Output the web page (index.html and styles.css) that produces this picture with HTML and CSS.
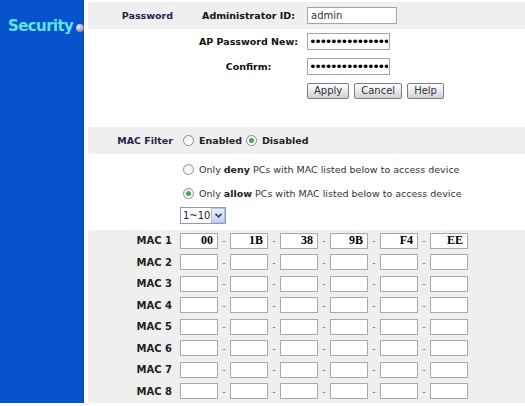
FILE: index.html
```html
<!DOCTYPE html>
<html>
<head>
    <title>Security</title>
    <link rel="stylesheet" href="styles.css">
</head>
<body>
    <div class="page">
        <div class="sidebar">
            <div class="side-title">Security<span class="ball"></span></div>
        </div>

        <div class="main">
            <!-- Password -->
            <div class="pw-grid">
                <div class="cell band sect">Password</div>
                <div class="cell band mid">Administrator ID:</div>
                <div class="cell band field"><input type="text" class="txt admin" value="admin"></div>

                <div class="cell"></div>
                <div class="cell mid">AP Password New:</div>
                <div class="cell field"><input type="password" class="txt pass" value="abcdefghijklmno"></div>

                <div class="cell"></div>
                <div class="cell mid">Confirm:</div>
                <div class="cell field"><input type="password" class="txt pass" value="abcdefghijklmno"></div>

                <div class="cell"></div>
                <div class="cell"></div>
                <div class="cell field btns">
                    <button class="btn">Apply</button>
                    <button class="btn">Cancel</button>
                    <button class="btn">Help</button>
                </div>
            </div>

            <!-- MAC Filter -->
            <div class="filter-grid">
                <div class="cell band sect">MAC Filter</div>
                <div class="cell band opts">
                    <label class="opt"><input type="radio" name="filter" class="radio"><b>Enabled</b></label>
                    <label class="opt"><input type="radio" name="filter" class="radio" checked><b>Disabled</b></label>
                </div>

                <div class="cell"></div>
                <div class="cell opts">
                    <label class="opt"><input type="radio" name="mode" class="radio"><span>Only <b>deny</b> PCs with MAC listed below to access device</span></label>
                </div>

                <div class="cell"></div>
                <div class="cell opts">
                    <label class="opt"><input type="radio" name="mode" class="radio" checked><span>Only <b>allow</b> PCs with MAC listed below to access device</span></label>
                </div>

                <div class="cell"></div>
                <div class="cell sel-cell">
                    <span class="sel-wrap">
                        <select class="sel">
                            <option>1~10</option>
                            <option>11~20</option>
                        </select>
                        <span class="sel-btn">
                            <svg width="7" height="5" viewBox="0 0 7 5"><path d="M0.5 0.8 L3.5 3.8 L6.5 0.8" fill="none" stroke="#2a3f7a" stroke-width="1.6"/></svg>
                        </span>
                    </span>
                </div>
            </div>

            <!-- MAC list -->
            <div class="mac-table" id="macTable"></div>
        </div>
    </div>

    <script>
        const macs = [
            ['00', '1B', '38', '9B', 'F4', 'EE']
        ];
        const table = document.getElementById('macTable');

        for (let i = 0; i < 8; i++) {
            const row = document.createElement('div');
            row.className = 'mac-row';
            let html = `<div class="mac-label">MAC ${i + 1}</div><div class="mac-fields">`;
            for (let j = 0; j < 6; j++) {
                const val = macs[i] ? macs[i][j] : '';
                if (j > 0) html += '<span class="dash">-</span>';
                html += `<input type="text" class="mac-in" maxlength="2" value="${val}">`;
            }
            html += '</div>';
            row.innerHTML = html;
            table.appendChild(row);
        }
    </script>
</body>
</html>
```

FILE: styles.css
```css
* {
    margin: 0;
    padding: 0;
    box-sizing: border-box;
}

body {
    background: #fff;
    font-family: "DejaVu Sans", Verdana, sans-serif;
    font-size: 9.5px;
    color: #222;
    overflow: hidden;
}

.page {
    display: flex;
    height: 406px;
}

.sidebar {
    width: 84px;
    height: 403px;
    background: #0653cd;
    border-right: 1px solid #0a47a8;
    flex-shrink: 0;
    padding-top: 17px;
}

.side-title {
    position: relative;
    color: #5fe2ea;
    font-family: "DejaVu Sans", Tahoma, sans-serif;
    font-weight: bold;
    font-size: 15px;
    padding-left: 8px;
    letter-spacing: -0.6px;
}

.ball {
    position: absolute;
    left: 76px;
    top: 7px;
    width: 8px;
    height: 8px;
    border-radius: 50%;
    background: radial-gradient(circle at 35% 35%, #f4f2f8 0%, #a8a0b8 55%, #6b5f80 100%);
}

.main {
    flex: 1;
    margin-left: 4px;
}

.cell {
    display: flex;
    align-items: center;
}

.band {
    background: #efefef;
}

.sect {
    justify-content: flex-end;
    padding-right: 17px;
    font-weight: bold;
    color: #23234e;
}

/* Password block */
.pw-grid {
    display: grid;
    grid-template-columns: 102px 117px 1fr;
    grid-template-rows: 27px 25px 25px 23px;
    margin-top: 2px;
}

.mid {
    justify-content: center;
    font-weight: bold;
    color: #111;
}

.txt {
    height: 17px;
    border: 1px solid #a5a5a5;
    background: #fff;
    font-family: "DejaVu Sans", Verdana, sans-serif;
    font-size: 10px;
    padding: 0 3px;
    color: #333;
    outline: none;
}

.admin {
    width: 90px;
}

.pass {
    width: 83px;
    font-size: 13px;
    letter-spacing: -2.4px;
    color: #000;
    padding: 0 1px;
}

.btns {
    gap: 5px;
}

.btn {
    height: 16px;
    padding: 0 6px;
    border: 1px solid #7d7d7d;
    border-radius: 2px;
    background: linear-gradient(#ffffff, #e4e4ea 60%, #cfcfd8);
    font-family: "DejaVu Sans", Verdana, sans-serif;
    font-size: 10px;
    color: #333;
    cursor: pointer;
}

/* MAC filter block */
.filter-grid {
    display: grid;
    grid-template-columns: 92px 1fr;
    grid-template-rows: 27px 30px 18px 28px;
    margin-top: 25px;
}

.filter-grid .sect {
    padding-right: 7px;
}

.opts {
    gap: 4px;
    padding-left: 3px;
    color: #333;
}

.opt {
    display: flex;
    align-items: center;
    gap: 5px;
}

.opt b {
    color: #222;
}

.radio {
    appearance: none;
    width: 11px;
    height: 11px;
    border: 1px solid #8d8d8d;
    border-radius: 50%;
    background: linear-gradient(#f2f2f2, #fff);
    display: grid;
    place-items: center;
}

.radio:checked::after {
    content: "";
    width: 5px;
    height: 5px;
    border-radius: 50%;
    background: #3fa860;
}

.sel-cell {
    align-items: flex-start;
    padding-top: 5px;
}

.sel-wrap {
    position: relative;
    display: inline-block;
}

.sel {
    appearance: none;
    width: 46px;
    height: 17px;
    border: 1px solid #8e9bb6;
    background: #fff;
    font-family: "DejaVu Sans", Verdana, sans-serif;
    font-size: 10px;
    color: #222;
    padding-left: 2px;
    outline: none;
}

.sel-btn {
    position: absolute;
    right: 1px;
    top: 1px;
    width: 14px;
    height: 15px;
    background: linear-gradient(#e8eefc, #c5d2ef);
    border: 1px solid #b4c2e2;
    display: flex;
    align-items: center;
    justify-content: center;
    pointer-events: none;
}

/* MAC list */
.mac-table {
    background: #efefef;
    height: 173px;
}

.mac-row {
    display: flex;
    align-items: center;
    height: 21.5px;
}

.mac-label {
    width: 92px;
    text-align: right;
    padding-right: 8px;
    font-size: 10px;
    font-weight: bold;
    color: #222;
}

.mac-fields {
    display: flex;
    align-items: center;
}

.mac-in {
    width: 38px;
    height: 16px;
    border: 1px solid #a9a9a9;
    background: #fff;
    text-align: right;
    padding: 0 4px;
    font-family: "Liberation Serif", "Times New Roman", serif;
    font-weight: bold;
    font-size: 12px;
    color: #000;
    outline: none;
}

.dash {
    width: 12px;
    text-align: center;
    color: #666;
}
```
